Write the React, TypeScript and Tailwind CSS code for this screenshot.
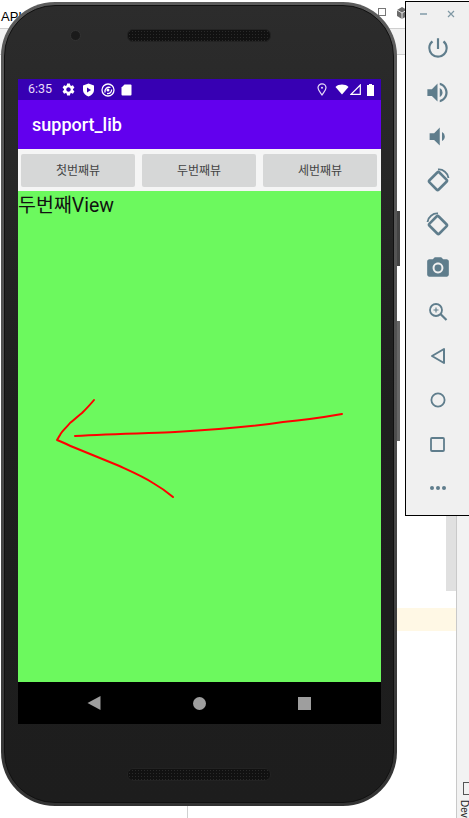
import { MdPowerSettingsNew, MdVolumeUp, MdVolumeDown, MdSettings, MdCameraAlt } from 'react-icons/md';

const iconColor = 'text-[#5f7d8c]';

const RotateLeft = ({ flip }: { flip?: boolean }) => (
  <svg width="26" height="26" viewBox="0 0 26 26" fill="none" stroke="currentColor" className={flip ? '-scale-x-100' : ''}>
    <rect x="6.5" y="7" width="13" height="14" rx="1.5" transform="rotate(45 13 14)" strokeWidth="2.6" />
    <path d="M13 2.5 C18 2 23 6 23.5 11" strokeWidth="1.8" />
  </svg>
);

const ToolButton = ({ children }: { children: React.ReactNode }) => (
  <div className={`h-[44px] w-full flex items-center justify-center ${iconColor}`}>{children}</div>
);

const ToolPanel = () => (
  <div className="absolute left-[405px] top-[1px] w-[70px] h-[515px] bg-[#f0f0f0] border border-black">
    <div className="h-[24px] flex items-center pl-[14px] gap-[20px] text-[#7f98a4]">
      <div className="w-[7px] h-[1.5px] bg-[#9db0ba]" />
      <svg width="8" height="8" viewBox="0 0 8 8" stroke="currentColor" strokeWidth="1.2">
        <path d="M1 1 L7 7 M7 1 L1 7" />
      </svg>
    </div>
    <div className="w-[63px] flex flex-col">
      <ToolButton><MdPowerSettingsNew size={26} /></ToolButton>
      <ToolButton><MdVolumeUp size={27} /></ToolButton>
      <ToolButton><MdVolumeDown size={27} /></ToolButton>
      <ToolButton><RotateLeft /></ToolButton>
      <ToolButton><RotateLeft flip /></ToolButton>
      <ToolButton><MdCameraAlt size={26} /></ToolButton>
      <ToolButton>
        <svg width="20" height="20" viewBox="0 0 20 20" fill="none" stroke="currentColor">
          <circle cx="8" cy="8" r="6" strokeWidth="1.8" />
          <path d="M12.5 12 L18.5 18" strokeWidth="2.2" />
          <path d="M5.5 8 H10.5 M8 5.5 V10.5" strokeWidth="1.1" />
        </svg>
      </ToolButton>
      <ToolButton>
        <svg width="16" height="18" viewBox="0 0 16 18" fill="none" stroke="currentColor" strokeWidth="2">
          <path d="M14 2 V16 L2 9 Z" strokeLinejoin="round" />
        </svg>
      </ToolButton>
      <ToolButton>
        <svg width="16" height="16" viewBox="0 0 16 16" fill="none" stroke="currentColor" strokeWidth="1.8">
          <circle cx="8" cy="8" r="6.6" />
        </svg>
      </ToolButton>
      <ToolButton>
        <svg width="15" height="15" viewBox="0 0 15 15" fill="none" stroke="currentColor" strokeWidth="1.8">
          <rect x="1" y="1" width="13" height="13" rx="1" />
        </svg>
      </ToolButton>
      <ToolButton>
        <div className="flex gap-[2px]">
          <div className="w-[4px] h-[4px] rounded-full bg-[#5f7d8c]" />
          <div className="w-[4px] h-[4px] rounded-full bg-[#5f7d8c]" />
          <div className="w-[4px] h-[4px] rounded-full bg-[#5f7d8c]" />
        </div>
      </ToolButton>
    </div>
  </div>
);

const Speaker = () => (
  <div className="w-[144px] h-[13px] rounded-[6px] border border-[#232323] bg-[#111111] bg-[radial-gradient(#2a2a2a_0.6px,transparent_0.6px)] bg-[length:3px_3px]" />
);

const StatusBar = () => (
  <div className="h-[21px] bg-[#3700b3] flex items-center pl-[10px] pr-[7px] text-white font-['Roboto',sans-serif]">
    <span className="text-[12.5px] leading-none text-[#e6dcf8]">6:35</span>
    <div className="flex items-center ml-[9px] gap-[6px]">
      <MdSettings size={15} />
      <svg width="13" height="14" viewBox="0 0 13 14">
        <path d="M6.5 0.5 L12 2.5 V7 C12 10 9.5 12.5 6.5 13.5 C3.5 12.5 1 10 1 7 V2.5 Z" fill="white" />
        <path d="M5 4.5 L9 7 L5 9.5 Z" fill="#3700b3" />
      </svg>
      <svg width="14" height="14" viewBox="0 0 14 14" fill="none" stroke="white">
        <circle cx="7" cy="7" r="6" strokeWidth="1.3" />
        <path d="M4 9.5 C3.5 6 6 3.5 9.5 4.5" strokeWidth="1.3" />
        <path d="M6 10.5 C9 11 11 8.5 10.5 6.5" strokeWidth="1.3" />
        <circle cx="7" cy="7" r="1.5" fill="white" stroke="none" />
      </svg>
      <svg width="11" height="12" viewBox="0 0 11 12">
        <path d="M3.5 0.5 H9.5 A1 1 0 0 1 10.5 1.5 V10.5 A1 1 0 0 1 9.5 11.5 H1.5 A1 1 0 0 1 0.5 10.5 V3.5 Z" fill="white" />
      </svg>
    </div>
    <div className="flex items-center ml-auto">
      <svg width="10" height="13" viewBox="0 0 10 13" fill="none" stroke="#e6dcf8" strokeWidth="1.2">
        <path d="M5 12 C3 9 1 7 1 4.8 A4 4 0 0 1 9 4.8 C9 7 7 9 5 12 Z" />
        <circle cx="5" cy="4.8" r="1" fill="#e6dcf8" stroke="none" />
      </svg>
      <svg width="14" height="11" viewBox="0 0 14 11" className="ml-[8px]">
        <path d="M0.5 3 C4 -0.2 10 -0.2 13.5 3 L7 10.5 Z" fill="white" />
      </svg>
      <svg width="11" height="11" viewBox="0 0 11 11" className="ml-[1px]" fill="none" stroke="white" strokeWidth="1.2">
        <path d="M10.3 1 V10.3 H1 Z" />
      </svg>
      <svg width="7" height="12" viewBox="0 0 7 12" className="ml-[6px]">
        <path d="M2 0 H5 V1 H7 V12 H0 V1 H2 Z" fill="white" />
      </svg>
    </div>
  </div>
);

const tabs = ['첫번째뷰', '두번째뷰', '세번째뷰'];

const Screen = () => (
  <div className="w-[363px] h-[645px] flex flex-col">
    <StatusBar />
    <div className="h-[49px] bg-[#6200ee] flex items-center pl-[14px]">
      <span className="text-white text-[18px] font-medium font-['Roboto',sans-serif]">support_lib</span>
    </div>
    <div className="h-[42px] bg-[#f5f5f5] flex items-center gap-[7px] pl-[3px]">
      {tabs.map((t) => (
        <button
          key={t}
          className="w-[114px] h-[33px] bg-[#d6d7d7] rounded-[2px] text-[12px] text-[#444444] font-['Noto_Sans_CJK_KR',sans-serif]"
        >
          {t}
        </button>
      ))}
    </div>
    <div className="relative flex-1 bg-[#6cf95e]">
      <p className="text-[19.5px] leading-[29px] text-[#111111] font-['Roboto','Noto_Sans_CJK_KR',sans-serif]">두번째View</p>
      <svg className="absolute inset-0 w-full h-full" viewBox="18 191 363 491" fill="none" stroke="#ff0000" strokeWidth="2" strokeLinecap="round" strokeLinejoin="round">
        <path d="M75 436 C110 434 150 433 175 432 C210 430 250 427 283 422 C305 420 325 417 342 414" />
        <path d="M94 400 C90 405 86 409 82 413 C78 416 74 420 70 423 C66 428 62 431 60 435 L57 440 C63 442 68 445 73 447 C88 453 102 459 117 465 C130 471 142 476 153 483 C160 487 167 492 173 497" />
      </svg>
    </div>
    <div className="h-[42px] bg-black flex items-center text-[#9e9e9e]">
      <svg width="14" height="16" viewBox="0 0 14 16" className="ml-[69px]">
        <path d="M13.5 1 V15 L0.5 8 Z" fill="#9e9e9e" />
      </svg>
      <div className="w-[13px] h-[13px] rounded-full bg-[#9e9e9e] ml-[92px]" />
      <div className="w-[13px] h-[13px] bg-[#9e9e9e] ml-[92px]" />
    </div>
  </div>
);

const Phone = () => (
  <div className="absolute left-[1px] top-[2px] w-[396px] h-[804px] rounded-[54px] bg-gradient-to-b from-[#5c5c5c] via-[#505050] to-[#333333] p-[3px]">
    <div className="h-full rounded-[51px] border border-[#111111] bg-gradient-to-b from-[#2c2c2c] via-[#1f1f1f] to-[#1d1d1d] flex flex-col items-start pl-[13px]">
      <div className="h-[73px] w-[363px] flex items-start pt-[23px]">
        <div className="mt-[1px] ml-[52px] w-[11px] h-[11px] rounded-full bg-[#1b1b1b] border border-[#333333]" />
        <div className="ml-[46px]"><Speaker /></div>
      </div>
      <Screen />
      <div className="w-[363px] flex justify-start pt-[44px] pl-[109px]">
        <Speaker />
      </div>
    </div>
  </div>
);

const App = () => (
  <div className="relative w-[469px] h-[818px] overflow-hidden bg-white">
    {/* IDE behind the emulator */}
    <div className="absolute left-0 top-[28px] w-[405px] h-[27px] bg-[#f2f2f2] border-t border-b border-[#cfcfcf]" />
    <span className="absolute left-[1px] top-[7px] text-[13px] text-black font-['Liberation_Sans',sans-serif]">API</span>
    <div className="absolute left-[378px] top-[8px] w-[8px] h-[8px] border border-[#777777]" />
    <svg width="10" height="12" viewBox="0 0 10 12" className="absolute left-[397px] top-[7px]">
      <path d="M5 0 L10 3 V9 L5 12 L0 9 V3 Z" fill="#6b6b6b" />
      <path d="M0 3 L5 6 L10 3 M5 6 V12" fill="none" stroke="#ffffff" strokeWidth="0.8" />
    </svg>
    <div className="absolute left-[397px] top-[608px] w-[59px] h-[23px] bg-[#fff8e5]" />
    <div className="absolute left-[446px] top-[516px] w-[10px] h-[75px] bg-[#e0e0e0]" />
    <div className="absolute left-[456px] top-[516px] w-[13px] h-[302px] bg-[#f2f2f2] border-l border-[#c9c9c9]">
      <div className="absolute left-[6px] top-[266px] w-[7px] h-[13px] border border-[#555555]" />
      <span className="absolute left-[2px] top-[284px] text-[10px] leading-none [writing-mode:vertical-rl] text-[#222222] font-['Liberation_Sans',sans-serif]">Dev</span>
    </div>
    <div className="absolute left-[187px] top-[806px] w-px h-[12px] bg-[#d0d0d0]" />
    <div className="absolute left-[397px] top-[211px] w-[3px] h-[55px] bg-[#444444]" />
    <div className="absolute left-[397px] top-[321px] w-[3px] h-[120px] bg-[#666666]" />
    <Phone />
    <ToolPanel />
  </div>
);

export default App;
